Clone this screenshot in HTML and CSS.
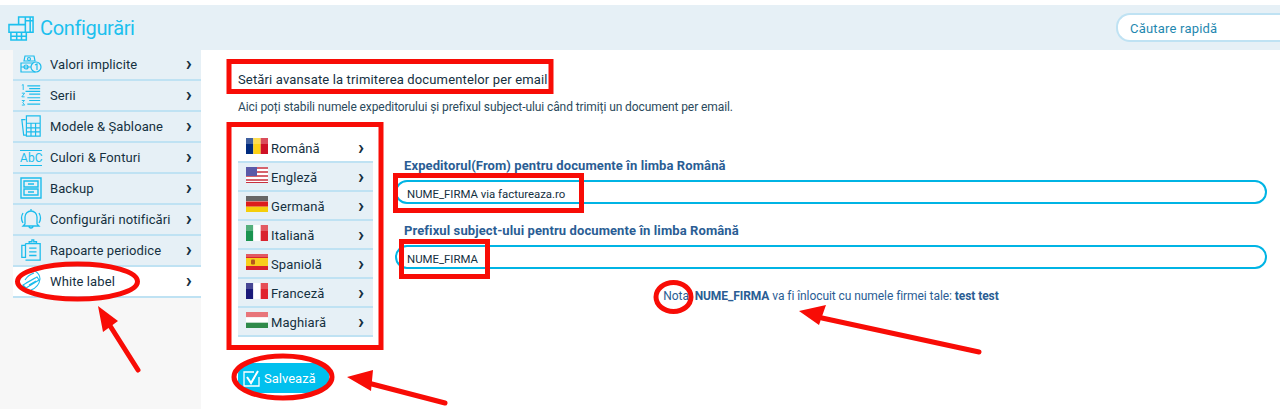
FILE: index.html
```html
<!DOCTYPE html>
<html lang="ro">
<head>
  <meta charset="UTF-8" />
  <title>Configurări</title>
  <link rel="stylesheet" href="styles.css">
</head>
<body>
  <!-- Header -->
  <header class="topbar">
    <h1 class="page-title">
      <svg class="title-icon" viewBox="0 0 28 27" fill="none" stroke="#1cc0ee" stroke-width="1.6">
        <path d="M1 10h17v8H1zM18 2h8v16h-8zM11 2h7v8h-7zM3 18h16v8H3zM9 18v8M14 18v8M3 22h16M23 2v16M18 6h8"/>
      </svg>
      Configurări
    </h1>
    <div class="quick-search">Căutare rapidă</div>
  </header>

  <div class="layout">
    <!-- Sidebar -->
    <nav class="sidebar">
      <a class="menu-item">
        <svg class="menu-icon" viewBox="0 0 22 18" fill="none" stroke="#1cbcec" stroke-width="1.2"><path d="M5 1h9l1 5H4zM1 8h14v9H1zM1 12h14"/><circle cx="9" cy="4" r="1.5"/><circle cx="6" cy="12" r="2"/><circle cx="16" cy="12" r="5" fill="#e6f0f6"/><path d="M15 10l2-1v6"/></svg>
        <span class="menu-label">Valori implicite</span><span class="chevron">›</span>
      </a>
      <a class="menu-item">
        <svg class="menu-icon" viewBox="0 0 22 24" fill="none" stroke="#1cbcec" stroke-width="1.2"><path d="M7 2h14M9 5h12M5 8h16M9 11h12M7 15h14M9 18h12M7 22h14"/><path d="M1 1.500l1.500-1v6M1 10h3l-3 4h3M1 18h3l-2 2 2 3H1" stroke-width="1"/></svg>
        <span class="menu-label">Serii</span><span class="chevron">›</span>
      </a>
      <a class="menu-item">
        <svg class="menu-icon" viewBox="0 0 22 24" fill="none" stroke="#1cbcec" stroke-width="1.300"><path d="M5 5H1l2 17h3"/><path d="M6 1h15v22H6zM6 9h15M6 14h15M6 18.500h15M11 9v14M16 9v14"/></svg>
        <span class="menu-label">Modele &amp; Șabloane</span><span class="chevron">›</span>
      </a>
      <a class="menu-item">
        <span class="abc-icon">AbC</span>
        <span class="menu-label">Culori &amp; Fonturi</span><span class="chevron">›</span>
      </a>
      <a class="menu-item">
        <svg class="menu-icon" viewBox="0 0 22 22" fill="none" stroke="#1cbcec" stroke-width="1.400"><path d="M1 1h20v20H1zM4 4h14v6H4zM4 12h14v6H4zM8 7h6M8 15h6"/></svg>
        <span class="menu-label">Backup</span><span class="chevron">›</span>
      </a>
      <a class="menu-item">
        <svg class="menu-icon" viewBox="0 0 22 22" fill="none" stroke="#1cbcec" stroke-width="1.300"><path d="M11 1v2M5 16V9a6 6 0 0 1 12 0v7l2 2H3zM9 18a2 2 0 0 0 4 0M3 5Q0 10 3 15M19 5q3 5 0 10"/></svg>
        <span class="menu-label">Configurări notificări</span><span class="chevron">›</span>
      </a>
      <a class="menu-item">
        <svg class="menu-icon" viewBox="0 0 22 24" fill="none" stroke="#1cbcec" stroke-width="1.400"><path d="M5 5v15H1V7h4M5 5h16v18H5M9 5V3h3V1h2v2h3v2M9 10h8M9 14h8M9 18h8"/></svg>
        <span class="menu-label">Rapoarte periodice</span><span class="chevron">›</span>
      </a>
      <a class="menu-item active">
        <svg class="menu-icon" viewBox="0 0 22 22" fill="none" stroke="#1cbcec" stroke-width="1.100"><path d="M3 15L17 7l2 3-13 8zM6 18q-4-1-3-3M15 1q5 3 5 8-1 8-9 11M5 10q3-5 9-7M6 13l9-5M9 15l7-4"/></svg>
        <span class="menu-label">White label</span><span class="chevron">›</span>
      </a>
    </nav>

    <!-- Main -->
    <main class="content">
      <h2 class="section-title">Setări avansate la trimiterea documentelor per email</h2>
      <p class="section-desc">Aici poți stabili numele expeditorului și prefixul subject-ului când trimiți un document per email.</p>

      <div class="settings">
        <ul class="languages">
          <li class="lang-item">
            <svg class="flag" viewBox="0 0 22 16"><rect width="7.300" height="16" fill="#002b7f"/><rect x="7.300" width="7.400" height="16" fill="#fcd116"/><rect x="14.700" width="7.300" height="16" fill="#ce1126"/><rect width="22" height="6" fill="#fff" opacity=".25"/></svg>
            <span class="lang-name">Română</span><span class="chevron">›</span>
          </li>
          <li class="lang-item">
            <svg class="flag" viewBox="0 0 22 16"><rect width="22" height="16" fill="#fff"/><path d="M0 1h22M0 5h22M0 9h22M0 13h22" stroke="#c8313e" stroke-width="1.400"/><path d="M0 15.500h22" stroke="#c8313e"/><rect width="11" height="9" fill="#5a5aa8"/></svg>
            <span class="lang-name">Engleză</span><span class="chevron">›</span>
          </li>
          <li class="lang-item">
            <svg class="flag" viewBox="0 0 22 16"><rect width="22" height="5.300" fill="#333"/><rect y="5.300" width="22" height="5.400" fill="#dd1c1c"/><rect y="10.700" width="22" height="5.300" fill="#f5ce0a"/><rect width="22" height="6" fill="#fff" opacity=".25"/></svg>
            <span class="lang-name">Germană</span><span class="chevron">›</span>
          </li>
          <li class="lang-item">
            <svg class="flag" viewBox="0 0 22 16"><rect width="7.300" height="16" fill="#1a9450"/><rect x="7.300" width="7.400" height="16" fill="#fff"/><rect x="14.700" width="7.300" height="16" fill="#d9232e"/><rect width="22" height="6" fill="#fff" opacity=".25"/></svg>
            <span class="lang-name">Italiană</span><span class="chevron">›</span>
          </li>
          <li class="lang-item">
            <svg class="flag" viewBox="0 0 22 16"><rect width="22" height="16" fill="#d9232e"/><rect y="4" width="22" height="8" fill="#f8cf1c"/><rect x="5" y="5.500" width="4" height="5" rx="1" fill="#b5571c"/><rect width="22" height="3" fill="#fff" opacity=".25"/></svg>
            <span class="lang-name">Spaniolă</span><span class="chevron">›</span>
          </li>
          <li class="lang-item">
            <svg class="flag" viewBox="0 0 22 16"><rect width="7.300" height="16" fill="#1a1a7a"/><rect x="7.300" width="7.400" height="16" fill="#fff"/><rect x="14.700" width="7.300" height="16" fill="#e0242e"/><rect width="22" height="6" fill="#fff" opacity=".2"/></svg>
            <span class="lang-name">Franceză</span><span class="chevron">›</span>
          </li>
          <li class="lang-item">
            <svg class="flag" viewBox="0 0 22 16"><rect width="22" height="5.300" fill="#e8757a"/><rect y="5.300" width="22" height="5.400" fill="#fff"/><rect y="10.700" width="22" height="5.300" fill="#2f8a4a"/></svg>
            <span class="lang-name">Maghiară</span><span class="chevron">›</span>
          </li>
        </ul>

        <form class="sender-form">
          <label class="field-label">Expeditorul(From) pentru documente în limba Română</label>
          <div class="text-field">NUME_FIRMA via factureaza.ro</div>
          <label class="field-label second">Prefixul subject-ului pentru documente în limba Română</label>
          <div class="text-field">NUME_FIRMA</div>
          <p class="note">Nota: <b>NUME_FIRMA</b> va fi înlocuit cu numele firmei tale: <b>test test</b></p>
        </form>
      </div>

      <button class="save-btn" type="button">
        <svg class="save-icon" viewBox="0 0 17 17" fill="none" stroke="#fff"><path d="M11 2H1v14h15V7" stroke-width="1.300"/><path d="M4 7l4 6 7-12" stroke-width="2"/></svg>
        Salvează
      </button>
    </main>
  </div>

  <!-- Red markup drawn over the screenshot -->
  <svg class="annotations" viewBox="0 0 1280 409" fill="none" stroke="#f80c06" stroke-width="5">
    <rect x="229" y="61.500" width="322" height="30"/>
    <rect x="229" y="124.500" width="152" height="223"/>
    <rect x="395.500" y="175.500" width="186" height="35"/>
    <rect x="401.500" y="241.500" width="86" height="35"/>
    <ellipse cx="77.500" cy="281.500" rx="60" ry="17.500"/>
    <ellipse cx="283" cy="377" rx="49" ry="21"/>
    <ellipse cx="673.500" cy="297" rx="17.500" ry="14.500"/>
    <path d="M138 370L107 321M445 403L368 383M979 352L822 318" stroke-linecap="round"/>
    <path d="M98 306l20 15-15 11zM347 377l26-7-2 21zM799 311l27-6-7 20z" fill="#f80c06" stroke="none"/>
  </svg>
</body>
</html>
```

FILE: styles.css
```css
* {
  box-sizing: border-box;
}
html, body {
  height: 409px;
  overflow: hidden;
}
body {
  margin: 0;
  padding-top: 5px;
  position: relative;
  background: #fff;
  color: #15303f;
  font-family: Roboto, "Liberation Sans", sans-serif;
  font-size: 13px;
}
/* Header */
.topbar {
  height: 45px;
  background: #e6f0f6;
  display: flex;
  align-items: center;
  justify-content: space-between;
  padding: 0 0 0 8px;
}
.page-title {
  margin: 0;
  display: flex;
  align-items: center;
  gap: 5px;
  color: #1cc0ee;
  font-size: 20px;
  font-weight: 400;
  letter-spacing: -.35px;
}
.title-icon {
  width: 27px;
  height: 26px;
}
.quick-search {
  width: 164px;
  height: 29px;
  padding: 6px 0 0 12px;
  background: #fff;
  border: 2px solid #bfe2f3;
  border-right: 0;
  border-radius: 14px 0 0 14px;
  color: #1f88b0;
  font-size: 13px;
  letter-spacing: .2px;
}
.layout {
  display: flex;
  height: 359px;
}
/* Sidebar */
.sidebar {
  width: 201px;
  padding-left: 13px;
  background: #f7f7f7;
}
.menu-item {
  height: 31px;
  padding: 0 8px 0 7px;
  display: flex;
  align-items: center;
  background: #e6f0f6;
  border-bottom: 2px solid #bfe2f3;
  font-size: 13px;
  letter-spacing: .1px;
}
.menu-item.active {
  background: #fff;
}
.menu-icon {
  width: 22px;
  height: 22px;
  margin-top: -2px;
  flex: none;
}
.abc-icon {
  width: 22px;
  flex: none;
  border-top: 1px solid #1cbcec;
  border-bottom: 1px solid #1cbcec;
  color: #1cbcec;
  font-size: 12px;
  line-height: 14px;
  text-align: center;
}
.menu-label {
  margin-left: 8px;
  flex: 1;
}
.chevron {
  margin: -4px 1px 0 0;
  font-size: 20px;
  font-weight: 700;
  line-height: 20px;
  color: #15303f;
}
/* Main */
.content {
  flex: 1;
  padding: 20px 13px 0 37px;
}
.section-title {
  margin: 0;
  font-size: 13px;
  font-weight: 400;
  line-height: 20px;
  letter-spacing: .15px;
}
.section-desc {
  margin: 9px 0 0;
  font-size: 12px;
  line-height: 16px;
  color: #2b4a5c;
  letter-spacing: -.09px;
}
.settings {
  display: flex;
  margin-top: 19px;
}
.languages {
  width: 135px;
  margin: 0;
  padding: 0;
  list-style: none;
}
.lang-item {
  height: 29px;
  padding: 2px 8px 0;
  display: flex;
  align-items: center;
  background: #e6f0f6;
  border-bottom: 2px solid #bfe2f3;
}
.lang-item:first-child {
  background: #fff;
}
.flag {
  width: 22px;
  height: 16px;
  margin: -6px 3px 0 0;
  flex: none;
}
.lang-name {
  flex: 1;
  font-size: 13px;
  letter-spacing: .1px;
}
.sender-form {
  flex: 1;
  margin-left: 22px;
  padding-top: 23px;
}
.field-label {
  display: block;
  color: #2a5d94;
  font-size: 13px;
  font-weight: 700;
  line-height: 18px;
  letter-spacing: .1px;
  margin-left: 9px;
}
.field-label.second {
  margin-top: 18px;
}
.text-field {
  height: 24px;
  margin-top: 5px;
  padding: 4px 0 0 10px;
  border: 2px solid #00b4e4;
  border-radius: 12px;
  font-size: 11.4px;
  line-height: 17px;
}
.note {
  margin: 19px 0 0;
  text-align: center;
  color: #2a5d94;
  font-size: 12px;
  line-height: 16px;
  letter-spacing: -.07px;
}
.save-btn {
  width: 91px;
  height: 30px;
  margin-top: 26px;
  padding: 1px 0 0 5px;
  display: flex;
  align-items: center;
  gap: 4px;
  background: #00c0ee;
  border: 0;
  border-radius: 12px;
  color: #fff;
  font-family: inherit;
  font-size: 13px;
}
.save-icon {
  width: 17px;
  height: 17px;
}
.annotations {
  position: absolute;
  left: 0;
  top: 0;
  width: 1280px;
  height: 409px;
  pointer-events: none;
}
```
